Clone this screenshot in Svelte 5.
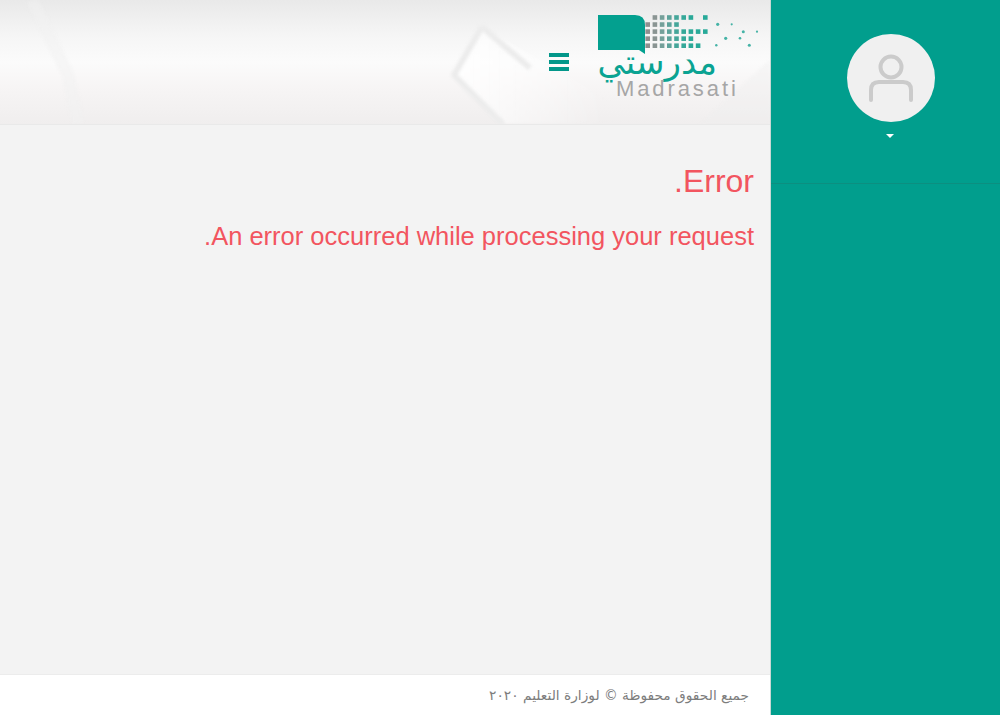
<script>
  // logo dot grid: [column indexes per row], fading grey to teal left to right
  const rows = [
    [1, 2, 3, 4, 5, 6, 8],
    [0, 1, 2, 3, 4],
    [0, 1, 2, 3, 4, 5, 6, 7, 8],
    [0, 1, 2, 3, 4, 5, 6],
    [0, 1, 2, 3, 4, 5, 6, 7],
  ];
  const colColors = ["#8f8f8f", "#8a9593", "#74a09a", "#5da39b", "#45a69a", "#35a899", "#2aa998", "#28aa99", "#28aa99"];
  const cells = rows.flatMap((cols, r) => cols.map((c) => ({ x: 57.7 + c * 7.2, y: 17.5 + r * 7.05, fill: colColors[c] })));
  const sparks = [
    [127.7, 24.3, 1.6], [141.7, 24.3, 1.1], [153.3, 31.7, 1.5], [167, 31.7, 1.1], [135.7, 38.3, 1.6],
    [150, 38.3, 1.3], [126.3, 45.3, 1.2], [159.3, 45.3, 1.5],
  ];
</script>

<div class="page">
  <div class="main">
    <header class="topbar">
      <svg class="bg-art" viewBox="0 0 770 124" preserveAspectRatio="none" aria-hidden="true">
        <defs>
          <linearGradient id="phone-glow" x1="0" x2="1" y1="0" y2="0">
            <stop offset="0" stop-color="#fff" stop-opacity="0.8" />
            <stop offset="1" stop-color="#fff" stop-opacity="0" />
          </linearGradient>
        </defs>
        <path d="M482 27 L454 75 L505 124 L610 124 L610 100 Z" fill="url(#phone-glow)" />
        <path d="M482 27 L454 75 L503 124" fill="none" stroke="#ececec" stroke-width="6" stroke-linejoin="round" />
        <path d="M482 27 L530 68" fill="none" stroke="#ececec" stroke-width="6" />
        <path d="M32 0 L68 75 L78 124" fill="none" stroke="#f2f2f2" stroke-width="12" opacity="0.5" />
        <path d="M700 124 L770 60 L770 124 Z" fill="#ededed" opacity="0.35" />
      </svg>
      <svg class="logo" width="180" height="100" viewBox="0 0 180 100" role="img" aria-label="Madrasati">
        {#each cells as d}
          <rect x={d.x - 2.3} y={d.y - 2.3} width="4.6" height="4.6" fill={d.fill} />
        {/each}
        {#each sparks as s}
          <circle cx={s[0]} cy={s[1]} r={s[2]} fill="#45b3a6" />
        {/each}
        <path d="M8 15 H45 Q55 15 55 25 V54 L49 50 H8 Z" fill="#03a08f" />
        <text class="ar" x="127" y="74" direction="rtl">مدرستي</text>
        <text class="en" x="26" y="96">Madrasati</text>
      </svg>
      <button class="menu" type="button" aria-label="Menu">
        <span></span><span></span><span></span>
      </button>
    </header>

    <section class="content">
      <h1>Error.</h1>
      <h2>An error occurred while processing your request.</h2>
    </section>

    <footer class="foot">جميع الحقوق محفوظة © لوزارة التعليم ٢٠٢٠</footer>
  </div>

  <aside class="side">
    <div class="profile">
      <div class="avatar">
        <svg width="44" height="48" viewBox="0 0 44 48" fill="none" stroke="#cbcbcb" stroke-width="4" aria-hidden="true">
          <circle cx="22" cy="13" r="10.5" />
          <path d="M2 46 V36 Q2 28 10 28 H34 Q42 28 42 36 V46" stroke-linecap="round" />
        </svg>
      </div>
      <span class="caret"></span>
    </div>
  </aside>
</div>

<style>
  :global(body) {
    margin: 0;
    background: #f3f3f3;
  }

  .page {
    display: grid;
    grid-template-columns: 771px 229px;
    height: 715px;
    overflow: hidden;
    font-family: "Liberation Sans", Arial, sans-serif;
  }

  .main {
    display: flex;
    flex-direction: column;
    direction: rtl;
    min-width: 0;
    background: #f3f3f3;
    border-right: 1px solid #c9d8d5;
  }

  .topbar {
    position: relative;
    display: flex;
    align-items: flex-start;
    flex: none;
    height: 125px;
    box-sizing: border-box;
    background: linear-gradient(#e9e9e9 0%, #f6f6f6 30%, #fbfbfb 50%, #f7f5f5 70%, #f0eeee 100%);
    border-bottom: 1px solid #e9e9e9;
    overflow: hidden;
  }

  .bg-art {
    position: absolute;
    inset: 0;
    width: 100%;
    height: 100%;
    filter: blur(1.5px);
  }

  .logo {
    position: relative;
    flex: none;
    direction: ltr;
  }

  .logo .ar {
    font-family: "DejaVu Sans", sans-serif;
    font-size: 34px;
    fill: #0aa392;
  }

  .logo .en {
    font-family: "Liberation Sans", Arial, sans-serif;
    font-size: 22px;
    letter-spacing: 2.9px;
    fill: #a6a6a6;
  }

  .menu {
    position: relative;
    display: flex;
    flex-direction: column;
    gap: 3px;
    width: 20px;
    margin: 53px 21px 0 0;
    padding: 0;
    border: 0;
    background: none;
  }

  .menu span {
    display: block;
    height: 4px;
    background: #03978a;
  }

  .content {
    flex: 1;
    padding: 0 16px;
    color: #f2555f;
  }

  h1 {
    margin: 37px 0 0;
    font-size: 32px;
    line-height: 38px;
    font-weight: 400;
  }

  h2 {
    margin: 20px 0 0;
    font-size: 25.5px;
    line-height: 32px;
    font-weight: 400;
  }

  .foot {
    flex: none;
    height: 41px;
    box-sizing: border-box;
    padding: 11px 21px 0 0;
    background: #fff;
    border-top: 1px solid #ececec;
    font-family: "DejaVu Sans", sans-serif;
    font-size: 13.75px;
    line-height: 18px;
    color: #7d7d7d;
  }

  .side {
    background: #019e8d;
  }

  .profile {
    display: flex;
    flex-direction: column;
    align-items: center;
    height: 184px;
    box-sizing: border-box;
    padding: 34px 0 0 11px;
    border-bottom: 1px solid #0c8f80;
  }

  .avatar {
    display: flex;
    align-items: center;
    justify-content: center;
    width: 88px;
    height: 88px;
    border-radius: 50%;
    background: #f0f0f0;
  }

  .caret {
    margin: 12px 3px 0 0;
    border-top: 4px solid #fff;
    border-left: 4px solid transparent;
    border-right: 4px solid transparent;
  }
</style>
